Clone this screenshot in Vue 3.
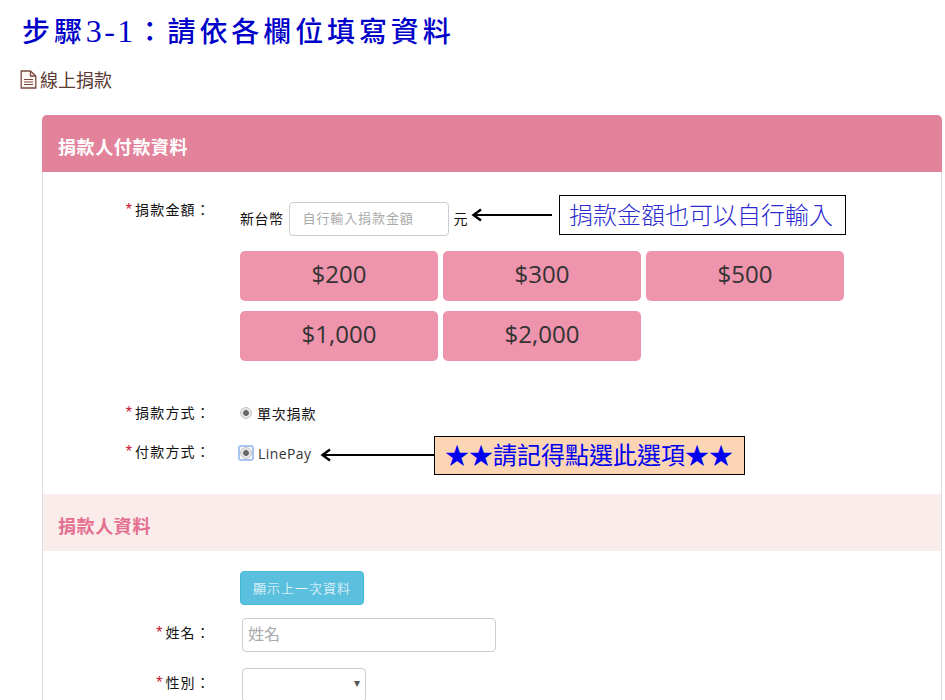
<script setup>
const amounts = ['$200', '$300', '$500', '$1,000', '$2,000']
</script>

<template>
  <div class="page">
    <h1 class="title">步驟<span class="digits">3-1</span>：請依各欄位填寫資料</h1>
    <div class="crumb">
      <svg class="doc" width="17" height="19" viewBox="0 0 17 19" fill="none" stroke="#7a4a40" stroke-width="1.3">
        <path d="M1.2 1H10.5L15.8 6V18H1.2Z" fill="#fdf8f4" />
        <path d="M10.5 1V6H15.8" />
        <path d="M4 9.5H13M4 12H13M4 14.5H13" stroke-width="1.1" />
      </svg>
      <span>線上捐款</span>
    </div>

    <section class="panel">
      <h2 class="head head-main">捐款人付款資料</h2>
      <div class="body body-pay">
        <div class="row row-amount">
          <label class="label"><i>*</i>捐款金額：</label>
          <div class="value">
            <div class="amount-line">
              <span class="unit">新台幣</span>
              <input class="input input-amount" placeholder="自行輸入捐款金額" />
              <span class="unit">元</span>
            </div>
            <div class="amounts">
              <button v-for="a in amounts" :key="a" class="amount" type="button">{{ a }}</button>
            </div>
          </div>
          <svg class="arrow arrow-1" width="82" height="14" viewBox="0 0 82 14" fill="none" stroke="#000" stroke-width="2">
            <path d="M2 7H81" />
            <path d="M10 1.5L2.5 7L10 12.5" stroke-width="2.4" />
          </svg>
          <div class="callout callout-1">捐款金額也可以自行輸入</div>
        </div>

        <div class="row row-radio first-radio">
          <label class="label"><i>*</i>捐款方式：</label>
          <label class="radio-wrap">
            <input class="radio" type="radio" name="kind" checked />
            <span>單次捐款</span>
          </label>
        </div>

        <div class="row row-radio second-radio">
          <label class="label"><i>*</i>付款方式：</label>
          <label class="radio-wrap">
            <span class="focus-ring"><input class="radio" type="radio" name="pay" checked /></span>
            <span class="latin">LinePay</span>
          </label>
          <svg class="arrow arrow-2" width="115" height="14" viewBox="0 0 115 14" fill="none" stroke="#000" stroke-width="2">
            <path d="M2 7H114" />
            <path d="M10 1.5L2.5 7L10 12.5" stroke-width="2.4" />
          </svg>
          <div class="callout callout-2">★★請記得點選此選項★★</div>
        </div>
      </div>

      <h2 class="head head-sub">捐款人資料</h2>
      <div class="body body-donor">
        <button class="show-last" type="button">顯示上一次資料</button>
        <div class="row row-name">
          <label class="label"><i>*</i>姓名：</label>
          <input class="input input-name" placeholder="姓名" />
        </div>
        <div class="row row-gender">
          <label class="label"><i>*</i>性別：</label>
          <div class="select"><span class="caret">▾</span></div>
        </div>
      </div>
    </section>
  </div>
</template>

<style scoped>
.page {
  height: 700px;
  overflow: hidden;
  box-sizing: border-box;
  padding: 12px 3px 0 20px;
  font-family: "Liberation Sans", "Noto Sans CJK TC", sans-serif;
  color: #222;
  background: #fff;
}
.title {
  margin: 0 0 0 2px;
  height: 38px;
  line-height: 38px;
  font-family: "Liberation Serif", "Noto Sans CJK TC", serif;
  font-size: 28px;
  font-weight: 500;
  letter-spacing: 3.9px;
  color: #0000c8;
  white-space: nowrap;
}
.digits {
  font-size: 32px;
  font-weight: 400;
  letter-spacing: 2.4px;
}
.crumb {
  display: flex;
  align-items: center;
  gap: 3px;
  margin-top: 15px;
  height: 28px;
  font-size: 18px;
  color: #5a3a32;
}
.doc {
  flex: none;
}
.panel {
  margin: 22px 0 0 22px;
  border: 1px solid #ddd;
  border-radius: 5px 5px 0 0;
  border-top: 0;
  background: #fff;
}
.head {
  margin: 0;
  height: 57px;
  line-height: 67px;
  padding-left: 15px;
  font-size: 18px;
  font-weight: 700;
  letter-spacing: 0.6px;
}
.head-main {
  margin: 0 -1px;
  padding-left: 16px;
  background: #e2829b;
  color: #fff;
  border-radius: 5px 5px 0 0;
}
.head-sub {
  background: #fbecec;
  color: #e4708f;
}
.body-pay {
  padding: 30px 0 29px;
}
.body-donor {
  padding-top: 20px;
}
.row {
  position: relative;
  display: grid;
  grid-template-columns: 168px 1fr;
  column-gap: 29px;
}
.label {
  font-size: 14px;
  letter-spacing: 1.2px;
  line-height: 22px;
  text-align: right;
  color: #111;
  white-space: nowrap;
}
.label i {
  font-style: normal;
  font-size: 16px;
  color: #c8102e;
  margin-right: 3px;
  letter-spacing: 0;
}
.row-amount .label {
  margin-top: -3px;
}
.amount-line {
  display: flex;
  align-items: center;
  gap: 5px;
}
.unit {
  font-size: 14px;
  letter-spacing: 0.5px;
  color: #111;
  padding-bottom: 3px;
}
.input {
  box-sizing: border-box;
  height: 34px;
  border: 1px solid #ccc;
  border-radius: 4px;
  background: #fff;
  font-family: inherit;
  outline: none;
}
.input::placeholder {
  color: #aaa;
  opacity: 1;
}
.input-amount {
  width: 160px;
  padding: 0 13px 2px;
  font-size: 13px;
  letter-spacing: 0.9px;
}
.amounts {
  display: grid;
  grid-template-columns: repeat(3, 198px);
  gap: 10px 5px;
  margin-top: 15px;
}
.amount {
  height: 50px;
  border: 0;
  border-radius: 5px;
  background: #ee94ac;
  color: #333;
  font-family: "Open Sans", sans-serif;
  font-size: 24px;
  padding: 0 0 5px;
}
.arrow {
  position: absolute;
}
.arrow-1 {
  left: 428px;
  top: 6px;
}
.arrow-2 {
  left: 277px;
  top: 7px;
}
.callout {
  position: absolute;
  box-sizing: border-box;
  border: 1px solid #000;
  white-space: nowrap;
  line-height: 1;
}
.callout-1 {
  left: 516px;
  top: -7px;
  width: 287px;
  height: 40px;
  padding: 8px 0 0 9px;
  font-size: 24px;
  font-weight: 300;
  color: #2a2ad0;
  background: #fff;
}
.callout-2 {
  left: 391px;
  top: -5px;
  width: 311px;
  height: 39px;
  padding: 7px 0 0 10px;
  font-size: 24px;
  color: #0000f0;
  background: #fcd5b5;
}
.row-radio {
  height: 24px;
}
.first-radio {
  margin-top: 41px;
}
.second-radio {
  margin-top: 15px;
}
.radio-wrap {
  display: flex;
  align-items: center;
  gap: 5px;
  font-size: 14px;
  letter-spacing: 0.8px;
  color: #111;
  padding-bottom: 2px;
}
.second-radio .radio-wrap {
  gap: 6px;
  padding-bottom: 0;
}
.latin {
  font-family: "Open Sans", sans-serif;
  letter-spacing: 0.4px;
  color: #333;
}
.radio {
  appearance: none;
  width: 12px;
  height: 12px;
  margin: 0;
  flex: none;
  display: block;
  border-radius: 50%;
  border: 1px solid #c4c4c4;
  background: radial-gradient(circle, #666 0 2.5px, #e6e6e6 3.2px);
}
.focus-ring {
  display: block;
  padding: 1px;
  margin: 0 -1px;
  background: #fff;
  outline: 2px solid #a8c4f0;
  outline-offset: -1px;
  border-radius: 2px;
}
.show-last {
  display: block;
  margin-left: 197px;
  width: 124px;
  height: 34px;
  border: 1px solid #46b8da;
  border-radius: 4px;
  background: #5bc0de;
  color: #fff;
  font-family: inherit;
  font-size: 13px;
  font-weight: 300;
  letter-spacing: 1px;
  padding: 0 0 2px;
}
.row-name {
  margin-top: 13px;
  align-items: center;
}
.row-name .label {
  padding-bottom: 4px;
}
.row-gender {
  margin-top: 16px;
}
.row-gender .label {
  line-height: 30px;
}
.input-name {
  margin-left: 2px;
  width: 254px;
  padding: 0 5px;
  font-size: 16px;
}
.select {
  position: relative;
  box-sizing: border-box;
  margin-left: 2px;
  width: 124px;
  height: 34px;
  border: 1px solid #ccc;
  border-radius: 4px;
}
.caret {
  position: absolute;
  right: 5px;
  top: 7px;
  font-size: 12px;
  color: #555;
}
</style>
